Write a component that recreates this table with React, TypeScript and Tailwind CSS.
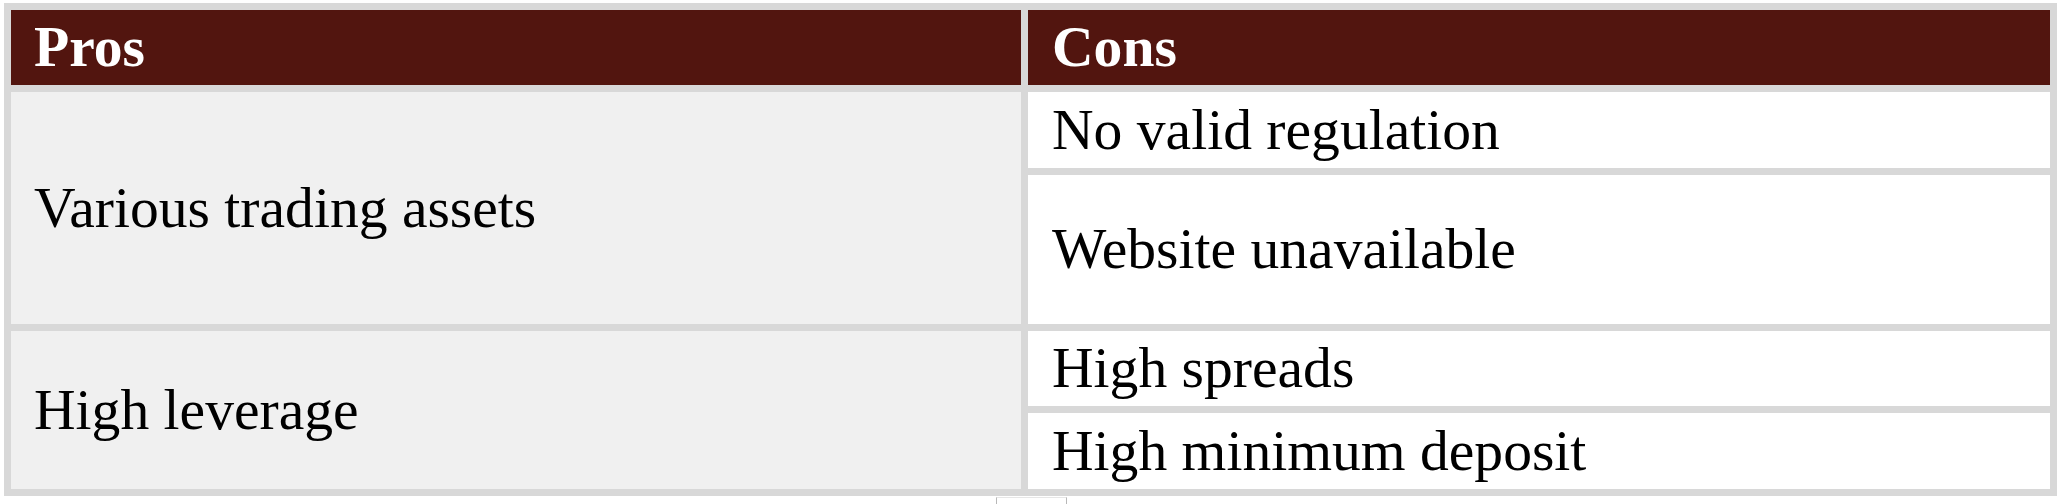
export default function App() {
  const font = { fontFamily: "'Liberation Serif', 'Times New Roman', serif" }

  return (
    <div className="w-[2060px] h-[504px] bg-white overflow-hidden pt-[3px] pl-[4px]" style={font}>
      <div className="w-[2053px] grid grid-cols-[1010px_1022px] grid-rows-[75px_76px_149px_75px_76px] gap-[7px] p-[7px] bg-[#d8d8d8] text-[57.6px] text-black">
        <div className="bg-[#52150f] text-white font-bold flex items-center pl-[23px]">Pros</div>
        <div className="bg-[#52150f] text-white font-bold flex items-center pl-[24px]">Cons</div>

        <div className="row-span-2 bg-[#f0f0f0] flex items-center pl-[23px]">Various trading assets</div>
        <div className="bg-white flex items-center pl-[24px]">No valid regulation</div>
        <div className="bg-white flex items-center pl-[24px]">Website unavailable</div>

        <div className="row-span-2 bg-[#f0f0f0] flex items-center pl-[23px]">High leverage</div>
        <div className="bg-white flex items-center pl-[24px]">High spreads</div>
        <div className="bg-white flex items-center pl-[24px]">High minimum deposit</div>
      </div>
      {/* stray control edge peeking below the table */}
      <div className="ml-[992px] mt-[1px] w-[71px] h-[10px] border-x border-t border-x-[#b8b8b8] border-t-[#e6e6e6]" />
    </div>
  )
}
